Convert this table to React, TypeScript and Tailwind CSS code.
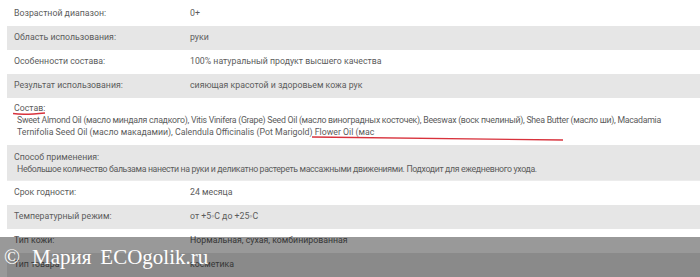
import React from "react";

type Row = { label: string; value: string };

const topRows: Row[] = [
  { label: "Возрастной диапазон:", value: "0+" },
  { label: "Область использования:", value: "руки" },
  { label: "Особенности состава:", value: "100% натуральный продукт высшего качества" },
  { label: "Результат использования:", value: "сияющая красотой и здоровьем кожа рук" },
];

const bottomRows: Row[] = [
  { label: "Срок годности:", value: "24 месяца" },
  { label: "Температурный режим:", value: "от +5◦С до +25◦С" },
  { label: "Тип кожи:", value: "Нормальная, сухая, комбинированная" },
  { label: "Тип товара", value: "косметика" },
];

const TableRow = ({ row, shaded }: { row: Row; shaded: boolean }) => (
  <div className={`flex h-6 items-center ${shaded ? "bg-[#e6e6e6]" : "bg-white"}`}>
    <div className="w-[183px] shrink-0 pl-[7px]">{row.label}</div>
    <div>{row.value}</div>
  </div>
);

export default function App() {
  return (
    <div
      className="relative h-[277px] w-[700px] overflow-hidden bg-white pt-[2px] pl-[7px] text-[8.75px] text-[#5c5c5c]"
      style={{ fontFamily: "Roboto, 'Liberation Sans', sans-serif" }}
    >
      {topRows.map((r, i) => (
        <TableRow key={r.label} row={r} shaded={i % 2 === 1} />
      ))}

      {/* Состав */}
      <div className="relative bg-white pt-[4px] pb-[7px] pl-[7px] leading-[12px]">
        <div>Состав:</div>
        <div className="whitespace-nowrap pl-[3px]">
          <div className="tracking-[-0.27px]">
            Sweet Almond Oil (масло миндаля сладкого), Vitis Vinifera (Grape) Seed Oil (масло виноградных косточек), Beeswax (воск пчелиный), Shea Butter (масло ши), Macadamia
          </div>
          <div>Ternifolia Seed Oil (масло макадамии), Calendula Officinalis (Pot Marigold) Flower Oil (мас</div>
        </div>
        <svg className="absolute left-0 top-0" width="693" height="47" viewBox="0 0 693 47">
          <path d="M6 15.5 C 15 17, 28 16, 38 15" stroke="#d8323c" strokeWidth="1.3" fill="none" />
          <path d="M305 39 C 400 40, 480 41, 556 42" stroke="#d8323c" strokeWidth="1.3" fill="none" />
        </svg>
      </div>

      {/* Способ применения */}
      <div className="border-b border-[#ececec] bg-[#e6e6e6] pt-[6px] pb-[5px] pl-[7px] leading-[12px]">
        <div>Способ применения:</div>
        <div className="whitespace-nowrap pl-[3px] tracking-[-0.35px]">
          Небольшое количество бальзама нанести на руки и деликатно растереть массажными движениями. Подходит для ежедневного ухода.
        </div>
      </div>

      {bottomRows.map((r, i) => (
        <TableRow key={r.label} row={r} shaded={i % 2 === 1} />
      ))}

      {/* watermark */}
      <div className="absolute bottom-0 left-0 flex h-[40px] w-full items-center bg-black/40 pl-[4px] pt-[2px] text-[21px] text-white" style={{ fontFamily: "'Liberation Serif', serif" }}>
        <span>©</span>
        <span className="ml-[12px]">Мария</span>
        <span className="ml-[9px]">ECOgolik.ru</span>
      </div>
    </div>
  );
}
